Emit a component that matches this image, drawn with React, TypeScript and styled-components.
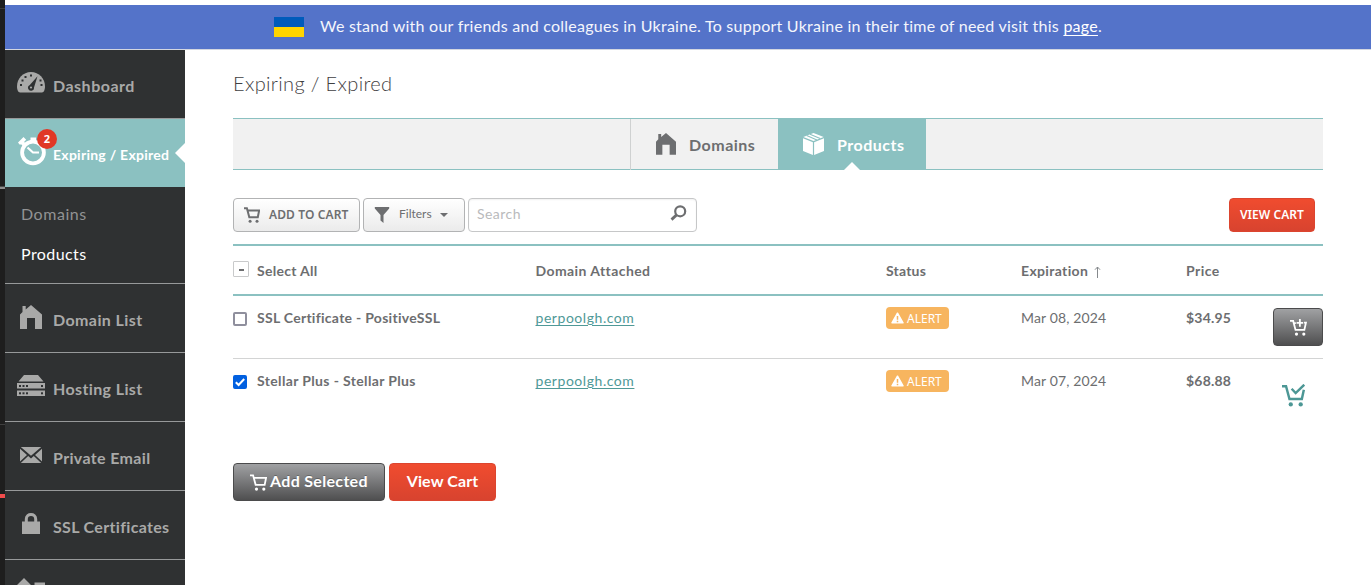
import React from "react";
import styled, { createGlobalStyle, css } from "styled-components";

const teal = "#8bc1c1";
const grey = "#6d6e70";

const Global = createGlobalStyle`
  * { box-sizing: border-box; }
  body { margin: 0; background: #fff; overflow: hidden; }
  #root { font-family: Lato, "Noto Sans", sans-serif; color: ${grey}; }
`;

const Text = styled.span<{ $ls?: number }>`
  letter-spacing: ${(p) => p.$ls ?? 0}px;
  white-space: nowrap;
`;

const Caps = styled(Text)`
  font-family: "Noto Sans", sans-serif;
`;

/* ---------- frame ---------- */

const Page = styled.div`
  display: grid;
  grid-template-columns: 5px 1fr;
  height: 585px;
  overflow: hidden;
`;

const Edge = styled.div`
  display: flex;
  flex-direction: column;
  background: #1e1e1e;
`;

const EdgeMark = styled.i<{ $gap: number; $h: number; $color: string }>`
  display: block;
  flex: none;
  margin-top: ${(p) => p.$gap}px;
  height: ${(p) => p.$h}px;
  background: ${(p) => p.$color};
`;

const Site = styled.div`
  display: grid;
  grid-template-rows: 45px 535px;
  padding-top: 5px;
  min-width: 0;
`;

const Banner = styled.div`
  display: flex;
  align-items: center;
  background: #5473c9;
  border-bottom: 1px solid #d3d6e0;
  color: #f4f6fc;
  font-size: 16px;
  line-height: 20px;
  padding-left: 269px;
`;

const BannerText = styled(Text)`
  margin-top: -2px;
`;

const Flag = styled.span`
  width: 30px;
  height: 20px;
  margin-right: 16px;
  background: linear-gradient(#005bbb 50%, #ffd500 50%);
`;

const BannerLink = styled.a`
  color: #fff;
  text-decoration: underline;
  text-underline-offset: 3px;
  text-decoration-thickness: 1px;
`;

const Body = styled.div`
  display: grid;
  grid-template-columns: 180px 1fr;
  min-height: 0;
`;

/* ---------- sidebar ---------- */

const Sidebar = styled.nav`
  background: #2f3132;
  height: 535px;
  overflow: hidden;
  color: #a9a9a8;
`;

const NavItem = styled.div<{ $active?: boolean }>`
  display: flex;
  height: ${(p) => (p.$active ? 68 : 69)}px;
  border-bottom: 1px solid #97999a;
  position: relative;
  font-size: 16px;
  font-weight: 700;
  line-height: 20px;
  ${(p) =>
    p.$active &&
    css`
      background: ${teal};
      color: #fff;
      font-size: 14px;
      border-bottom: 0;
      &::after {
        content: "";
        position: absolute;
        right: 0;
        top: 24px;
        border: 10px solid transparent;
        border-right-color: #fff;
        border-left: 0;
      }
    `}
  > span {
    padding-top: 26px;
  }
`;

const NavIcon = styled.div`
  width: 48px;
  padding-left: 12px;
  padding-top: 18px;
  flex: none;
  svg {
    display: block;
  }
`;

const Count = styled.b`
  position: absolute;
  left: 32px;
  top: 10px;
  width: 20px;
  height: 20px;
  border-radius: 50%;
  background: #e03826;
  color: #fff;
  font: 700 11px/20px "Open Sans", sans-serif;
  text-align: center;
`;

const SubNav = styled.div`
  height: 97px;
  padding: 7px 0 0 16px;
  border-bottom: 1px solid #97999a;
`;

const SubItem = styled.div<{ $current?: boolean }>`
  font-size: 16px;
  line-height: 40px;
  color: ${(p) => (p.$current ? "#fff" : "#929394")};
`;

/* ---------- main ---------- */

const Main = styled.main`
  padding: 0 48px;
  min-width: 0;
`;

const Title = styled.h1`
  margin: 0;
  height: 68px;
  padding-top: 21px;
  font-size: 20px;
  font-weight: 300;
  line-height: 24px;
  color: #3f4042;
`;

const Tabs = styled.div`
  display: flex;
  justify-content: center;
  height: 52px;
  border-top: 1px solid ${teal};
  border-bottom: 1px solid ${teal};
  background: #f1f1f1;
`;

const Tab = styled.div<{ $active?: boolean }>`
  position: relative;
  display: flex;
  width: 148px;
  height: 51px;
  font-size: 16px;
  font-weight: 700;
  line-height: 20px;
  padding-left: 25px;
  border-left: 1px solid #cfd1d1;
  svg {
    margin: 14px 13px 0 0;
    flex: none;
  }
  > span {
    padding-top: 16px;
  }
  ${(p) =>
    p.$active &&
    css`
      background: ${teal};
      border-left-color: ${teal};
      padding-left: 24px;
      color: #fff;
      &::after {
        content: "";
        position: absolute;
        left: 65px;
        bottom: 0;
        border: 8px solid transparent;
        border-bottom-color: #fff;
        border-top: 0;
      }
    `}
`;

const Toolbar = styled.div`
  display: flex;
  align-items: flex-start;
  gap: 3px;
  height: 74px;
  padding: 28px 8px 0 0;
`;

const ToolButton = styled.button<{ $w: number; $strong?: boolean }>`
  display: flex;
  align-items: center;
  width: ${(p) => p.$w}px;
  height: 34px;
  padding: 0 0 0 10px;
  border: 1px solid #b2b3b4;
  border-radius: 4px;
  background: linear-gradient(#fff, #ebebeb);
  font-family: inherit;
  font-size: 12px;
  line-height: 16px;
  font-weight: ${(p) => (p.$strong ? 600 : 400)};
  color: ${grey};
  svg {
    flex: none;
  }
  > span {
    margin: ${(p) => (p.$strong ? "-1px" : "-2px")} 8px 0 9px;
  }
`;

const SearchBox = styled.div`
  display: flex;
  align-items: center;
  justify-content: space-between;
  width: 229px;
  height: 34px;
  padding: 0 9px 3px 8px;
  border: 1px solid #c6c7c8;
  border-radius: 4px;
  box-shadow: inset 0 1px 2px rgba(0, 0, 0, 0.06);
  font-size: 14px;
  line-height: 20px;
  color: #b9babc;
  svg {
    margin-bottom: 1px;
  }
`;

const RedButton = styled.button<{ $large?: boolean }>`
  border: 1px solid #dc452f;
  border-radius: 4px;
  background: linear-gradient(#f04c2f, #d8432f);
  color: #fff;
  font-family: inherit;
  font-weight: ${(p) => (p.$large ? 700 : 600)};
  padding: 0 0 ${(p) => (p.$large ? 3 : 0)}px;
  width: ${(p) => (p.$large ? 107 : 86)}px;
  height: ${(p) => (p.$large ? 38 : 34)}px;
  font-size: ${(p) => (p.$large ? 16 : 12)}px;
  line-height: 20px;
`;

const Spacer = styled.div`
  flex: 1;
`;

const Row = styled.div<{ $head?: boolean; $line?: boolean }>`
  display: grid;
  grid-template-columns: 24px 278.5px 350.5px 135px 165px 1fr;
  height: ${(p) => (p.$head ? 52 : 63)}px;
  padding-top: ${(p) => (p.$head ? 15 : 12)}px;
  font-size: 14px;
  line-height: 20px;
  font-weight: ${(p) => (p.$head ? 700 : 400)};
  ${(p) =>
    p.$head &&
    css`
      border-top: 2px solid ${teal};
      border-bottom: 2px solid ${teal};
    `}
  ${(p) => p.$line && "border-bottom: 1px solid #d3d4d4;"}
`;

const Strong = styled.div`
  font-weight: 700;
`;

const ToggleAll = styled.span`
  display: flex;
  align-items: center;
  justify-content: center;
  width: 16px;
  height: 16px;
  border: 1px solid #c9cacb;
  border-radius: 1px;
  &::after {
    content: "";
    width: 5px;
    height: 2px;
    margin-top: 1px;
    background: ${grey};
  }
`;

const Check = styled.span<{ $on?: boolean }>`
  display: flex;
  width: 14px;
  height: 14px;
  margin-top: 4px;
  border: 2px solid ${(p) => (p.$on ? "#0160e0" : "#8f8f9d")};
  border-radius: 2px;
  background: ${(p) => (p.$on ? "#0160e0" : "#fff")};
`;

const DomainLink = styled.a`
  color: #4f9997;
  text-decoration: underline;
  text-underline-offset: 2px;
  text-decoration-thickness: 1px;
`;

const Alert = styled.div`
  display: flex;
  align-items: center;
  gap: 3px;
  width: 63px;
  height: 22px;
  margin-top: -1px;
  padding-left: 5px;
  border-radius: 4px;
  background: #f7b55f;
  color: #fff;
  font-size: 12px;
  > span {
    padding-top: 1px;
  }
`;

const PriceCell = styled.div`
  display: flex;
  justify-content: space-between;
`;

const CartCell = styled.div`
  display: flex;
  justify-content: flex-end;
  align-items: flex-start;
`;

const darkButton = css`
  border: 1px solid #4b4b4c;
  border-radius: 4px;
  background: linear-gradient(#a0a1a3, #4f4f50);
  color: #fff;
  height: 38px;
  padding: 0;
`;

const CartButton = styled.button`
  ${darkButton}
  display: flex;
  align-items: center;
  justify-content: center;
  width: 50px;
  svg {
    margin-top: 1px;
  }
`;

const InCart = styled.div`
  display: flex;
  width: 50px;
  padding: 13px 0 0 9px;
  color: #4c9795;
`;

const Actions = styled.div`
  display: flex;
  gap: 4px;
  margin-top: 41px;
`;

const AddSelected = styled.button`
  ${darkButton}
  display: flex;
  align-items: center;
  width: 152px;
  padding: 0 0 3px 16px;
  gap: 3px;
  font-family: inherit;
  font-size: 16px;
  line-height: 20px;
  font-weight: 700;
  text-shadow: 0 -1px 0 rgba(0, 0, 0, 0.25);
  svg {
    margin-top: 4px;
  }
`;

const ArrowSvg = styled.svg`
  margin-left: 2px;
  vertical-align: -2px;
`;

/* ---------- icons ---------- */

const Gauge = () => (
  <svg width="28" height="32" viewBox="0 0 28 32">
    <path fill="currentColor" d="M3 24.500C1.200 24.500 0 21.500 0 18.500 0 10.500 6 4 14 4s14 6.500 14 14.500c0 3-1.200 6-3 6z" />
    <g fill="#2f3132">
      <rect x="3" y="16" width="2" height="2" />
      <rect x="4.500" y="11.500" width="2" height="2" />
      <rect x="7.500" y="8" width="2" height="2" />
      <rect x="13" y="6.500" width="2" height="2" />
      <rect x="23.500" y="16" width="2" height="2" />
      <rect x="22.500" y="11.500" width="2" height="2" />
      <path d="M20.500 8.200 17 19.500a3 3 0 1 1-4.200-2.500z" />
    </g>
    <circle cx="14" cy="19.500" r="1.100" fill="currentColor" />
  </svg>
);

const Clock = () => (
  <svg width="32" height="32" viewBox="0 0 32 32">
    <circle cx="16" cy="15.500" r="10.900" fill="none" stroke="currentColor" strokeWidth="3.800" />
    <path fill="currentColor" d="M13.500 0.500h5.500v5h-5.500zM1 5.500 6.500 0l2.700 2.700-2 2L9 7.500 6.500 10 4.500 7.500 2.500 7.500z" />
    <path fill="none" stroke="currentColor" strokeWidth="2.200" d="m10.500 10.500 5.500 5h6" />
  </svg>
);

const House = ({ size }: { size: number }) => (
  <svg width={size} height={(size * 24) / 22} viewBox="0 0 22 24">
    <path fill="currentColor" d="M0 9.500 2.500 7V1h3.200v3.500L11 0l11 9.500V24h-7V13H7v11H0z" />
  </svg>
);

const Server = () => (
  <svg width="28" height="22" viewBox="0 0 28 22">
    <path fill="currentColor" d="M7 0h14l5.500 6.500h-25zM0 8h28v5.500H0zM0 15.500h28V21H0z" />
    <g fill="#2f3132">
      <rect x="2" y="10" width="2" height="2" />
      <rect x="5.500" y="10" width="2" height="2" />
      <rect x="9" y="10" width="2" height="2" />
      <rect x="24" y="10" width="2" height="2" />
      <rect x="2" y="17.300" width="2" height="2" />
      <rect x="5.500" y="17.300" width="2" height="2" />
      <rect x="9" y="17.300" width="2" height="2" />
      <rect x="24" y="17.300" width="2" height="2" />
    </g>
  </svg>
);

const Mail = () => (
  <svg width="22" height="16" viewBox="0 0 22 16">
    <path fill="currentColor" d="M.8 0h20.400L11 8.800zM0 1.800 7 8 0 14.600zM22 1.800 15 8l7 6.600zM8.200 9l2.800 2.400L13.800 9l7.400 7H.8z" />
  </svg>
);

const Lock = () => (
  <svg width="18" height="21" viewBox="0 0 18 21">
    <path fill="currentColor" d="M0 8.500h18V21H0z" />
    <path fill="none" stroke="currentColor" strokeWidth="3" d="M4.300 9.500V6c0-6 9.400-6 9.400 0v3.500" />
  </svg>
);

const Shapes = () => (
  <svg width="28" height="24" viewBox="0 0 28 24">
    <path fill="currentColor" d="M7 0 14 7 7 14 0 7zM17.500 4.500H28V16H17.500z" />
  </svg>
);

const Box = () => (
  <svg width="21" height="22" viewBox="0 0 21 22">
    <path fill="currentColor" d="M0 5.300 9.900 9.300v12.700L0 18zM21 5.300 11.100 9.300v12.700L21 18z" />
    <path fill="currentColor" d="M10.500 0 20.700 4 10.500 8.100 .3 4z" />
    <path stroke={teal} strokeWidth="1.100" fill="none" d="M7 1.200 17.200 5.500M3.700 2.600 13.900 7" />
  </svg>
);

const cartPaths = {
  plain: "M0 1.300h2.900L5.300 10.200h8.500L15.100 3.600H3.700",
  plus: "M0 1.800h3L5.200 10.300h8.300L15 3.500h-1.800M4 3.800h1.500M9.300 0v7.200M6.200 3.700h6.200",
  check: "M0 1.500h2.800L5.200 10.500h8.600L15.200 4M6.700 3.300l2.800 3L15.500 .5",
};

const Cart = ({
  w = 16,
  kind = "plain",
  stroke = 1.7,
}: {
  w?: number;
  kind?: keyof typeof cartPaths;
  stroke?: number;
}) => (
  <svg width={w} height={w} viewBox="0 0 16 16">
    <path fill="none" stroke="currentColor" strokeWidth={stroke} d={cartPaths[kind]} />
    <circle cx="6.100" cy="14.200" r="1.500" fill="currentColor" />
    <circle cx="13" cy="14.200" r="1.500" fill="currentColor" />
  </svg>
);

const Funnel = () => (
  <svg width="16" height="16" viewBox="0 0 16 16">
    <path fill="currentColor" d="M.8 0h14.400v1.500L9.500 8v8L6.500 13.500V8L.8 1.500z" />
  </svg>
);

const Caret = () => (
  <svg width="8" height="4" viewBox="0 0 8 4">
    <path fill="currentColor" d="M0 0h8L4 4z" />
  </svg>
);

const Magnifier = () => (
  <svg width="17" height="16" viewBox="0 0 17 16">
    <circle cx="10.200" cy="6.300" r="5" fill="none" stroke={grey} strokeWidth="2.200" />
    <path stroke={grey} strokeWidth="2.800" d="M6.600 9.900 1.500 14.600" />
  </svg>
);

const Warning = () => (
  <svg width="13" height="12" viewBox="0 0 13 12">
    <path fill="#fff" stroke="#fff" strokeWidth="1.500" strokeLinejoin="round" d="M6.500 1.200 12 10.800H1z" />
    <path stroke="#f7b55f" strokeWidth="1.500" d="M6.500 4v3.700M6.500 8.700v1.500" />
  </svg>
);

const Tick = () => (
  <svg width="10" height="10" viewBox="0 0 10 10">
    <path fill="none" stroke="#fff" strokeWidth="2" d="M.8 5.200 3.600 8 9.200 2" />
  </svg>
);

const Arrow = () => (
  <ArrowSvg width="7" height="12" viewBox="0 0 7 12">
    <path fill="none" stroke="#85898c" strokeWidth="1" d="M3.500 12V1M1 3.700 3.500 1 6 3.700" />
  </ArrowSvg>
);

/* ---------- data ---------- */

const nav = [
  { label: "Domain List", ls: 0.4, icon: <House size={22} />, x: 3, y: 3 },
  { label: "Hosting List", ls: 0.38, icon: <Server />, x: 0, y: 4 },
  { label: "Private Email", ls: 0.35, icon: <Mail />, x: 3, y: 7 },
  { label: "SSL Certificates", ls: 0.33, icon: <Lock />, x: 5, y: 4 },
  { label: "", ls: 0, icon: <Shapes />, x: 0, y: 0 },
];

const IconSlot = styled.div<{ $x: number; $y: number }>`
  padding: ${(p) => p.$y}px 0 0 ${(p) => p.$x}px;
`;

const rows = [
  { name: "SSL Certificate - PositiveSSL", ls: 0.28, date: "Mar 08, 2024", price: "$34.95", on: false },
  { name: "Stellar Plus - Stellar Plus", ls: 0.36, date: "Mar 07, 2024", price: "$68.88", on: true },
];

export default function App() {
  return (
    <Page>
      <Global />
      <Edge>
        <EdgeMark $gap={8} $h={1} $color="#3a3a3a" />
        <EdgeMark $gap={177} $h={1} $color="#4a4a4a" />
        <EdgeMark $gap={0} $h={2} $color="#8d8d8d" />
        <EdgeMark $gap={235} $h={1} $color="#3f3f3f" />
        <EdgeMark $gap={69} $h={4} $color="#f14c4c" />
      </Edge>
      <Site>
        <Banner>
          <Flag />
          <BannerText $ls={0.247}>
            We stand with our friends and colleagues in Ukraine. To support Ukraine in their time of need visit this{" "}
            <BannerLink>page</BannerLink>.
          </BannerText>
        </Banner>
        <Body>
          <Sidebar>
            <NavItem>
              <NavIcon><Gauge /></NavIcon>
              <Text $ls={0.5}>Dashboard</Text>
            </NavItem>
            <NavItem $active>
              <NavIcon><Clock /></NavIcon>
              <Count>2</Count>
              <Text $ls={0.26}>Expiring / Expired</Text>
            </NavItem>
            <SubNav>
              <SubItem><Text $ls={0.55}>Domains</Text></SubItem>
              <SubItem $current><Text $ls={0.42}>Products</Text></SubItem>
            </SubNav>
            {nav.map((n) => (
              <NavItem key={n.label}>
                <NavIcon>
                  <IconSlot $x={n.x} $y={n.y}>{n.icon}</IconSlot>
                </NavIcon>
                <Text $ls={n.ls}>{n.label}</Text>
              </NavItem>
            ))}
          </Sidebar>
          <Main>
            <Title><Text $ls={0.35}>Expiring / Expired</Text></Title>
            <Tabs>
              <Tab>
                <House size={20} />
                <Text $ls={0.5}>Domains</Text>
              </Tab>
              <Tab $active>
                <Box />
                <Text $ls={0.5}>Products</Text>
              </Tab>
            </Tabs>
            <Toolbar>
              <ToolButton $w={127} $strong>
                <Cart stroke={2} />
                <Caps $ls={0.12}>ADD TO CART</Caps>
              </ToolButton>
              <ToolButton $w={102}>
                <Funnel />
                <Text $ls={0}>Filters</Text>
                <Caret />
              </ToolButton>
              <SearchBox>
                <Text $ls={0.45}>Search</Text>
                <Magnifier />
              </SearchBox>
              <Spacer />
              <RedButton><Caps $ls={0.05}>VIEW CART</Caps></RedButton>
            </Toolbar>
            <Row $head>
              <ToggleAll />
              <Text $ls={0.3}>Select All</Text>
              <Text $ls={0.42}>Domain Attached</Text>
              <Text $ls={0.2}>Status</Text>
              <Text $ls={0.35}>Expiration <Arrow /></Text>
              <Text $ls={0.45}>Price</Text>
            </Row>
            {rows.map((r) => (
              <Row key={r.name} $line={!r.on}>
                <Check $on={r.on}>{r.on && <Tick />}</Check>
                <Strong><Text $ls={r.ls}>{r.name}</Text></Strong>
                <div><DomainLink><Text $ls={0.55}>perpoolgh.com</Text></DomainLink></div>
                <Alert>
                  <Warning />
                  <Caps>ALERT</Caps>
                </Alert>
                <div><Text $ls={0.14}>{r.date}</Text></div>
                <PriceCell>
                  <Strong><Text $ls={0.2}>{r.price}</Text></Strong>
                  <CartCell>
                    {r.on ? (
                      <InCart><Cart w={23} kind="check" stroke={1.7} /></InCart>
                    ) : (
                      <CartButton><Cart w={17} kind="plus" /></CartButton>
                    )}
                  </CartCell>
                </PriceCell>
              </Row>
            ))}
            <Actions>
              <AddSelected>
                <Cart w={17} />
                <Text $ls={0.32}>Add Selected</Text>
              </AddSelected>
              <RedButton $large><Text $ls={0.1}>View Cart</Text></RedButton>
            </Actions>
          </Main>
        </Body>
      </Site>
    </Page>
  );
}
